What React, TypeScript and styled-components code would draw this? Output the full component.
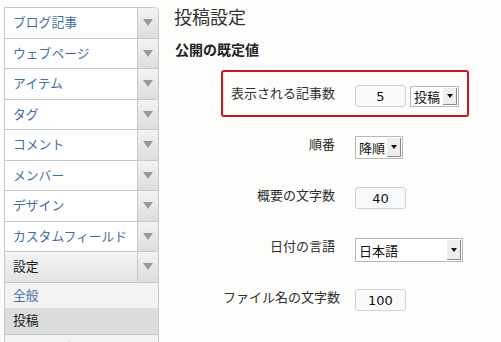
import styled, { createGlobalStyle } from 'styled-components';

const GlobalStyle = createGlobalStyle`
  html, body {
    margin: 0;
    padding: 0;
    background: #fdfdfb;
  }
  body {
    font-family: "Noto Sans CJK JP", "Noto Sans", sans-serif;
    color: #333;
    overflow: hidden;
  }
`;

type MenuItem = { label: string; active?: boolean };

const menu: MenuItem[] = [
  { label: 'ブログ記事' },
  { label: 'ウェブページ' },
  { label: 'アイテム' },
  { label: 'タグ' },
  { label: 'コメント' },
  { label: 'メンバー' },
  { label: 'デザイン' },
  { label: 'カスタムフィールド' },
  { label: '設定', active: true },
];

const subMenu = [
  { label: '全般', current: false },
  { label: '投稿', current: true },
  { label: 'コミュニケーション', current: false },
];

const App = () => {
  return (
    <>
      <GlobalStyle />
      <StPage>
        <StSidebar>
          {menu.map((item) => (
            <StMenuRow key={item.label} active={!!item.active}>
              <StMenuLabel active={!!item.active}>{item.label}</StMenuLabel>
              <StMenuArrow>
                <svg width="10" height="7" viewBox="0 0 10 7">
                  <path d="M0 0 H10 L5 7 Z" fill="#999" />
                </svg>
              </StMenuArrow>
            </StMenuRow>
          ))}
          {subMenu.map((sub) => (
            <StSubItem key={sub.label} current={sub.current}>
              {sub.label}
            </StSubItem>
          ))}
        </StSidebar>

        <StMain>
          <StTitle>投稿設定</StTitle>
          <StHeading>公開の既定値</StHeading>
          <StForm>
            <StField highlighted>
              <StLabel>表示される記事数</StLabel>
              <StControls>
                <StInput>5</StInput>
                <Select value="投稿" width={49} />
              </StControls>
            </StField>
            <StField>
              <StLabel>順番</StLabel>
              <StControls>
                <Select value="降順" width={48} height={23} />
              </StControls>
            </StField>
            <StField>
              <StLabel>概要の文字数</StLabel>
              <StControls>
                <StInput>40</StInput>
              </StControls>
            </StField>
            <StField>
              <StLabel>日付の言語</StLabel>
              <StControls>
                <Select value="日本語" width={108} height={24} />
              </StControls>
            </StField>
            <StField>
              <StLabel>ファイル名の文字数</StLabel>
              <StControls>
                <StInput>100</StInput>
              </StControls>
            </StField>
          </StForm>
        </StMain>
      </StPage>
    </>
  );
};

const Select = ({ value, width, height = 21 }: { value: string; width: number; height?: number }) => (
  <StSelect style={{ width, height }}>
    <span>{value}</span>
    <StSelectArrow>
      <svg width="6" height="4" viewBox="0 0 6 4">
        <path d="M0 0 H6 L3 4 Z" fill="#111" />
      </svg>
    </StSelectArrow>
  </StSelect>
);

export default App;

const StPage = styled.div`
  display: flex;
  align-items: flex-start;
  padding: 7px 0 0 4px;
  height: 342px;
  box-sizing: border-box;
`;

const StSidebar = styled.nav`
  width: 155px;
  box-sizing: border-box;
  border: 1px solid #c5c9cc;
  border-bottom: none;
  border-top-right-radius: 5px;
  overflow: hidden;
  flex-shrink: 0;
`;

const StMenuRow = styled.div<{ active: boolean }>`
  display: flex;
  height: 29.5px;
  border-bottom: 1px solid #c5c9cc;
  background: ${({ active }) => (active ? 'linear-gradient(#f4f4f4, #e2e3e3)' : '#fff')};
`;

const StMenuLabel = styled.div<{ active: boolean }>`
  flex: 1;
  display: flex;
  align-items: center;
  padding-left: 8px;
  font-size: 12.8px;
  line-height: 1;
  color: ${({ active }) => (active ? '#1a1a1a' : '#3f6fa3')};
`;

const StMenuArrow = styled.div`
  width: 20px;
  display: flex;
  align-items: center;
  justify-content: center;
  border-left: 1px solid #c5c9cc;
  background: linear-gradient(#f3f3f3, #dcdddd);
`;

const StSubItem = styled.div<{ current: boolean }>`
  height: 25.5px;
  display: flex;
  align-items: center;
  padding-left: 8px;
  font-size: 12.8px;
  line-height: 1;
  background: ${({ current }) => (current ? '#dcdedd' : '#f3f3f3')};
  color: ${({ current }) => (current ? '#1a1a1a' : '#3f6fa3')};
  border-bottom: ${({ current }) => (current ? '1px solid #c5c9cc' : 'none')};
`;

const StMain = styled.main`
  flex: 1;
  padding-left: 15px;
`;

const StTitle = styled.h1`
  margin: -3px 0 0 0;
  font-size: 18px;
  line-height: 24px;
  font-weight: normal;
  color: #333;
`;

const StHeading = styled.h2`
  margin: 12px 0 0 1px;
  font-size: 14px;
  line-height: 18px;
  font-weight: bold;
  color: #222;
`;

const StForm = styled.div`
  margin: 12px 0 0 47px;
  width: 248px;
  display: flex;
  flex-direction: column;
  gap: 4px;
`;

const StField = styled.div<{ highlighted?: boolean }>`
  display: flex;
  align-items: flex-start;
  gap: 20px;
  height: 47px;
  box-sizing: border-box;
  padding: 13px 0 0 0;
  border: 2px solid ${({ highlighted }) => (highlighted ? '#c9161e' : 'transparent')};
  border-radius: 3px;
`;

const StLabel = styled.div`
  width: 112px;
  text-align: right;
  font-size: 13px;
  line-height: 16px;
  color: #2e2e2e;
  white-space: nowrap;
`;

const StControls = styled.div`
  display: flex;
  gap: 4px;
  align-items: center;
`;

const StInput = styled.div`
  width: 51px;
  height: 22px;
  box-sizing: border-box;
  border: 1px solid #cfd1d3;
  border-radius: 3px;
  background: #f8f9fa;
  display: flex;
  align-items: center;
  justify-content: center;
  font-family: "DejaVu Sans", sans-serif;
  font-size: 13px;
  color: #111;
`;

const StSelect = styled.div`
  box-sizing: border-box;
  display: flex;
  align-items: stretch;
  border: 1px solid #b6b9bc;
  background: #fff;
  font-size: 13px;
  color: #111;

  & > span {
    flex: 1;
    display: flex;
    align-items: center;
    padding-left: 3px;
    line-height: 1;
    white-space: nowrap;
  }
`;

const StSelectArrow = styled.div`
  width: 13px;
  margin: 1px 1px 1px 0;
  display: flex;
  align-items: center;
  justify-content: center;
  background: #eeeeee;
  border-right: 1px solid #8a8a8a;
  border-bottom: 1px solid #8a8a8a;
`;
